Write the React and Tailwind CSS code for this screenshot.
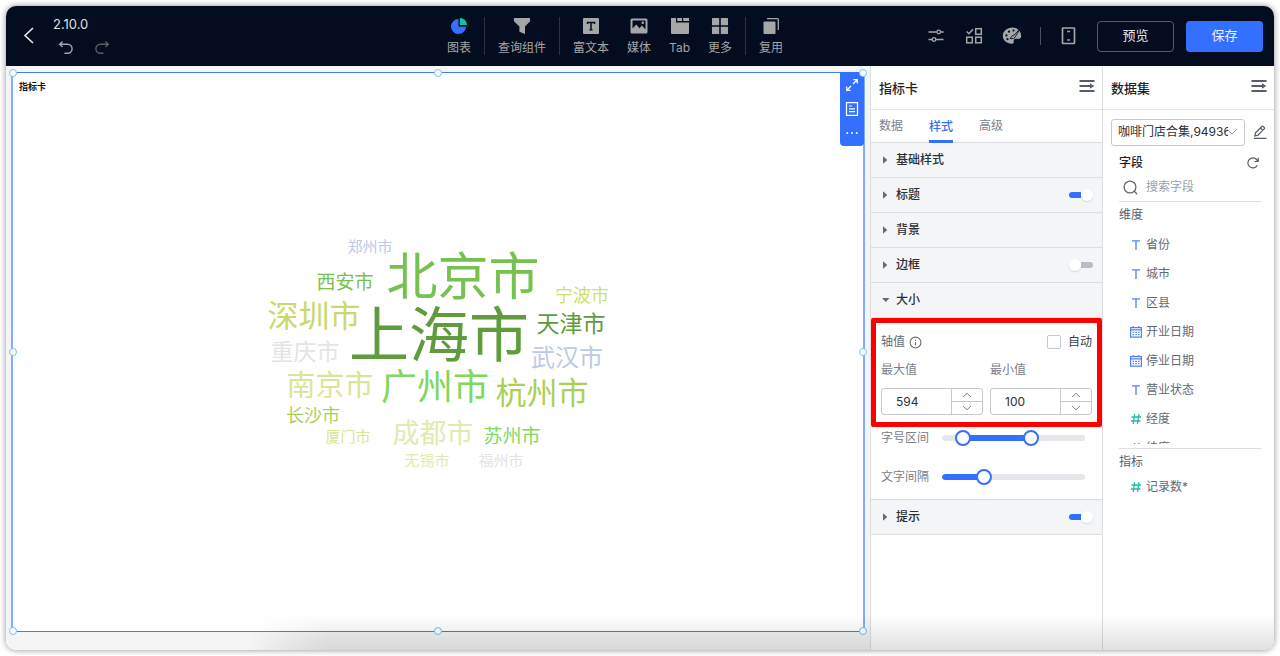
import React, { useState } from "react";
import { Info } from "lucide-react";

const words = [
  { text: "郑州市", x: -68, y: -105, size: 15, color: "#bcc9e8" },
  { text: "北京市", x: 25, y: -75, size: 51, color: "#76c150" },
  { text: "西安市", x: -93, y: -69, size: 19, color: "#76c150" },
  { text: "宁波市", x: 144, y: -56, size: 18, color: "#cfdf6c" },
  { text: "深圳市", x: -124, y: -36, size: 31, color: "#cad96b" },
  { text: "上海市", x: 1, y: -17, size: 60, color: "#609b3d" },
  { text: "天津市", x: 133, y: -28, size: 23, color: "#609b3d" },
  { text: "重庆市", x: -133, y: 0, size: 23, color: "#e4e4e4" },
  { text: "武汉市", x: 129, y: 6, size: 24, color: "#bcc9e8" },
  { text: "南京市", x: -108, y: 34, size: 29, color: "#dbe596" },
  { text: "广州市", x: -3, y: 35, size: 36, color: "#80d860" },
  { text: "杭州市", x: 104, y: 41, size: 31, color: "#abcf55" },
  { text: "长沙市", x: -125, y: 64, size: 18, color: "#abcf55" },
  { text: "厦门市", x: -90, y: 85, size: 15, color: "#dbe596" },
  { text: "成都市", x: -5, y: 82, size: 27, color: "#e2eab0" },
  { text: "苏州市", x: 74, y: 85, size: 19, color: "#80d860" },
  { text: "无锡市", x: -11, y: 109, size: 15, color: "#e2eab0" },
  { text: "福州市", x: 63, y: 109, size: 15, color: "#e4e4e4" },
];

const navGroups = [
  [{ label: "图表", icon: "pie" }],
  [{ label: "查询组件", icon: "funnel" }],
  [
    { label: "富文本", icon: "text" },
    { label: "媒体", icon: "media" },
    { label: "Tab", icon: "tab" },
    { label: "更多", icon: "more" },
  ],
  [{ label: "复用", icon: "reuse" }],
];

const fields = [
  { name: "省份", type: "text" },
  { name: "城市", type: "text" },
  { name: "区县", type: "text" },
  { name: "开业日期", type: "date" },
  { name: "停业日期", type: "date" },
  { name: "营业状态", type: "text" },
  { name: "经度", type: "number" },
  { name: "纬度", type: "number" },
];

function NavIcon({ name }) {
  const svg = "h-[18px] w-[18px]";
  if (name === "pie")
    return (
      <svg viewBox="0 0 18 18" className={svg}>
        <path d="M8.500 2A7.500 7.500 0 1 0 16 9.800H8.500Z" fill="#3370ff" />
        <path d="M10 1a7 7 0 0 1 7 7h-7Z" fill="#04c8a8" />
      </svg>
    );
  if (name === "funnel")
    return (
      <svg viewBox="0 0 18 18" className={svg} fill="#a6a6a6">
        <path d="M1.500 1h15a.6.6 0 0 1 .6.6v2.600L12 9.600V17l-5.600-2.300V9.600L.9 4.200V1.600a.6.6 0 0 1 .6-.6Z" />
      </svg>
    );
  if (name === "text")
    return (
      <svg viewBox="0 0 18 18" className={svg}>
        <rect x="1" y="1" width="16" height="16" rx="1" fill="#a6a6a6" />
        <path d="M5.500 7V5.500h7V7M9 5.500v7.200M7.500 12.700h3" stroke="#040c1f" strokeWidth="1.500" fill="none" />
      </svg>
    );
  if (name === "media")
    return (
      <svg viewBox="0 0 18 18" className={svg}>
        <rect x=".5" y="1.500" width="17" height="15" rx="1.500" fill="#a6a6a6" />
        <path d="M2.500 3.500h13v9L12 8.500l-2.500 2.800L6.300 7.500l-3.800 4Z" fill="#040c1f" />
        <circle cx="12.800" cy="5.800" r="1.300" fill="#a6a6a6" />
      </svg>
    );
  if (name === "tab")
    return (
      <svg viewBox="0 0 18 18" className={svg} fill="#a6a6a6">
        <path d="M0 1h5v4.500h13V16a1 1 0 0 1-1 1H1a1 1 0 0 1-1-1Z" />
        <path d="M6.200 1h4.800v3H6.200ZM12.200 1H18v3h-5.800Z" />
      </svg>
    );
  if (name === "more")
    return (
      <svg viewBox="0 0 18 18" className={svg} fill="#a6a6a6">
        <rect x="1" y="1" width="7.200" height="7.200" rx=".5" />
        <rect x="9.800" y="1" width="7.200" height="7.200" rx=".5" />
        <rect x="1" y="9.800" width="7.200" height="7.200" rx=".5" />
        <rect x="9.800" y="9.800" width="7.200" height="7.200" rx=".5" />
      </svg>
    );
  return (
    <svg viewBox="0 0 18 18" className={svg}>
      <rect x="1.500" y="4.500" width="12" height="12.500" rx="1" fill="#a6a6a6" />
      <path d="M5 1.700h10.500a.8.8 0 0 1 .8.8V13" stroke="#a6a6a6" strokeWidth="1.300" fill="none" />
    </svg>
  );
}

function Separator({ tall }) {
  return <span className={tall ? "mx-1 h-[38px] w-px bg-[#2c3342]" : "h-[18px] w-px bg-[#4a505d]"} />;
}

function Header() {
  return (
    <header className="flex h-[60px] shrink-0 items-center bg-[#040c1f] text-[#a6a6a6]">
      <div className="flex flex-1 items-center gap-4 pl-[15px]">
        <button type="button" aria-label="返回" className="flex h-8 w-4 items-center justify-center text-[#e8e8ea]">
          <svg viewBox="0 0 16 20" className="h-5 w-4" fill="none" stroke="currentColor" strokeWidth="1.600">
            <path d="M12 2 4 9.500 12 17" />
          </svg>
        </button>
        <div className="flex flex-col gap-[6px] pb-[2px]">
          <span className="text-[13px] leading-5 text-[#dfe0e3]">2.10.0</span>
          <div className="flex gap-5 pl-[5px]">
            <button type="button" aria-label="撤销" className="text-[#a4a6ab]">
              <svg viewBox="0 0 16 16" className="size-4" fill="none" stroke="currentColor" strokeWidth="1.400">
                <path d="M4.600 1.500 1.600 4.300l3 2.800M2 4.300h7.600a4.500 4.500 0 0 1 0 9H6.500" />
              </svg>
            </button>
            <button type="button" aria-label="重做" className="text-[#5b5e66]">
              <svg viewBox="0 0 16 16" className="size-4" fill="none" stroke="currentColor" strokeWidth="1.400">
                <path d="m11.400 1.500 3 2.800-3 2.800M14 4.300H6.400a4.500 4.500 0 0 0 0 9h3.100" />
              </svg>
            </button>
          </div>
        </div>
      </div>

      <nav className="mr-[54px] flex items-center">
        {navGroups.map((group, i) => (
          <React.Fragment key={i}>
            {i > 0 && <Separator tall />}
            {group.map((item) => (
              <button key={item.label} type="button" className="flex flex-col items-center gap-[5px] px-[9px] text-xs leading-4">
                <NavIcon name={item.icon} />
                {item.label}
              </button>
            ))}
          </React.Fragment>
        ))}
      </nav>

      <div className="flex flex-1 items-center justify-end gap-[18px] pr-[11px]">
        <button type="button" aria-label="配置">
          <svg viewBox="0 0 20 20" className="size-5" fill="none" stroke="currentColor" strokeWidth="1.300">
            <path d="M2.500 6h8.200M14.700 6h3M2.500 13.500h3.500M10 13.500h7.500" />
            <circle cx="12.700" cy="6" r="1.800" />
            <circle cx="8" cy="13.500" r="1.800" />
          </svg>
        </button>
        <button type="button" aria-label="组件">
          <svg viewBox="0 0 20 20" className="size-5" fill="none" stroke="currentColor" strokeWidth="1.500">
            <path d="m2.700 5.500 2.200 2.200L9 3.200" />
            <rect x="11.700" y="2.700" width="5.600" height="5.600" />
            <rect x="2.700" y="11.200" width="5.600" height="5.600" />
            <rect x="11.700" y="11.200" width="5.600" height="5.600" />
          </svg>
        </button>
        <button type="button" aria-label="主题">
          <svg viewBox="0 0 20 20" className="size-5">
            <path
              d="M10.500 1.500C5 1.500.8 5.200.8 9.800c0 4.500 4 7.900 8.700 7.900 1.800 0 2.400-1 2.200-2.200-.2-1.600.4-2.700 2.300-2.700h2.300c1.700 0 2.900-1 2.900-2.900C19.200 5.200 15.300 1.500 10.500 1.500Z"
              fill="currentColor"
            />
            <g fill="#040c1f">
              <circle cx="4.400" cy="9.400" r="1.100" />
              <circle cx="7" cy="5.700" r="1.100" />
              <circle cx="11.500" cy="4.500" r="1.100" />
              <circle cx="5.500" cy="13.200" r="1.100" />
            </g>
            <path d="M19.700.8 12.300 9c-2-.3-2.600 1.800-4.300 3.500 2.700.5 5.300-.3 5.600-2.300Z" fill="currentColor" stroke="#040c1f" strokeWidth=".9" />
          </svg>
        </button>
        <Separator />
        <button type="button" aria-label="移动端">
          <svg viewBox="0 0 20 20" className="size-5" fill="none" stroke="currentColor" strokeWidth="1.700">
            <rect x="3.500" y="2" width="12" height="15.500" rx=".6" />
            <path d="M8.200 5.500h2.800M8.200 14h2.800" />
          </svg>
        </button>
        <div className="flex gap-3 text-[13px]">
          <button type="button" className="h-[31px] w-[77px] rounded border border-[#565b67] text-[#e4e5e8]">
            预览
          </button>
          <button type="button" className="h-[31px] w-[77px] rounded bg-[#3370ff] text-[#eaf0ff]">
            保存
          </button>
        </div>
      </div>
    </header>
  );
}

const handlePlaces = [
  "left-0 top-0",
  "left-1/2 top-0",
  "left-full top-0",
  "left-0 top-1/2",
  "left-full top-1/2",
  "left-0 top-full",
  "left-1/2 top-full",
  "left-full top-full",
];

function Canvas() {
  return (
    <main className="flex min-w-0 flex-1 bg-[#f4f5f7] px-[5px] pt-[6px] pb-[18px]">
      <section className="relative flex flex-1 flex-col border-x-2 border-y border-x-[#85aaff] border-y-[#3f7cff] bg-white">
        <h1 className="px-[6px] pt-[6px] text-[9px] leading-4 font-bold text-[#111111]">指标卡</h1>
        <div className="-mt-[22px] flex flex-1 items-center justify-center">
          <svg viewBox="-172 -120 344 240" className="h-[240px] w-[344px]" role="img" aria-label="城市词云">
            {words.map((w) => (
              <text key={w.text} x={w.x} y={Math.round(w.y + w.size * 0.38) - 1} fontSize={w.size} fill={w.color} textAnchor="middle">
                {w.text}
              </text>
            ))}
          </svg>
        </div>
        <div className="absolute -top-px -right-px flex h-[74px] w-6 flex-col items-center justify-between rounded-b-sm bg-[#3370ff] py-[6px] text-white">
          <button type="button" aria-label="放大">
            <svg viewBox="0 0 14 14" className="size-[14px]" fill="none" stroke="currentColor" strokeWidth="1.200">
              <path d="M8 6l4-4M8.500 1.700h3.800v3.800M6 8l-4 4M1.700 8.500v3.800h3.800" />
            </svg>
          </button>
          <button type="button" aria-label="查看数据">
            <svg viewBox="0 0 14 14" className="size-[14px]" fill="none" stroke="currentColor" strokeWidth="1.200">
              <path d="M1.500.7h11v12.600h-11ZM4 4h3M4 6.800h6M4 9.600h6" />
            </svg>
          </button>
          <button type="button" aria-label="更多操作">
            <svg viewBox="0 0 14 14" className="size-[14px]" fill="currentColor">
              <circle cx="2.200" cy="7" r="1" />
              <circle cx="7" cy="7" r="1" />
              <circle cx="11.800" cy="7" r="1" />
            </svg>
          </button>
        </div>
        {handlePlaces.map((place) => (
          <span
            key={place}
            className={`absolute size-2 -translate-x-1/2 -translate-y-1/2 rounded-full border border-[#6fc5f7] bg-white ${place}`}
          />
        ))}
      </section>
    </main>
  );
}

function CollapseIcon() {
  return (
    <svg viewBox="0 0 16 14" className="h-[14px] w-4" fill="none" stroke="#575d6b" strokeWidth="1.800">
      <path d="M.5 2h15M.5 7H12M.5 12h15" />
      <path d="m11 4.300 4.300 2.700L11 9.700Z" fill="#575d6b" stroke="none" />
    </svg>
  );
}

function PanelTitle({ children }) {
  return (
    <div className="flex h-11 shrink-0 items-center justify-between border-b border-[#e3e5e8] pr-[7px] pl-2">
      <h2 className="text-[13px] leading-5 font-medium text-[#1f2329]">{children}</h2>
      <button type="button" aria-label="收起" className="-mt-1">
        <CollapseIcon />
      </button>
    </div>
  );
}

function Toggle({ label, defaultOn }) {
  const [on, setOn] = useState(defaultOn);
  const knob = <span className="size-3 rounded-full bg-white shadow-[0_1px_2px_rgba(0,0,0,0.12)]" />;
  return (
    <label className="relative flex cursor-pointer items-center">
      <input type="checkbox" className="sr-only" aria-label={label} checked={on} onChange={() => setOn(!on)} />
      {!on && knob}
      <span className={on ? "h-[6px] w-3 rounded-l-full bg-[#3370ff]" : "h-[6px] w-3 rounded-r-full bg-[#b9bcc4]"} />
      {on && knob}
    </label>
  );
}

function SectionRow({ title, open, toggle }) {
  return (
    <div className="flex h-[35px] items-center justify-between border-b border-[#dcdee2] bg-[#f4f5f7] pr-[9px] pl-[11px]">
      <button type="button" aria-expanded={!!open} className="flex items-center gap-[6px] text-xs font-medium text-[#2b2f36]">
        <svg viewBox="0 0 8 8" className="size-2" fill="#646a73">
          <path d={open ? "M0 2h7.500L3.800 6Z" : "M1 .3 5.300 4 1 7.700Z"} />
        </svg>
        {title}
      </button>
      {toggle !== undefined && <Toggle label={title} defaultOn={toggle} />}
    </div>
  );
}

function NumberField({ id, label, initial }) {
  const [value, setValue] = useState(initial);
  return (
    <div className="flex min-w-0 flex-col gap-[10px]">
      <label htmlFor={id} className="text-xs leading-4 text-[#7b808a]">
        {label}
      </label>
      <div className="flex h-[27px] rounded-[3px] border border-[#c6c9cf] bg-white">
        <input
          id={id}
          inputMode="numeric"
          className="w-0 min-w-0 flex-1 pl-[14px] text-xs text-[#2b2f36] outline-none"
          value={value}
          onChange={(e) => setValue(Number(e.target.value) || 0)}
        />
        <div className="flex w-[31px] flex-col border-l border-[#c6c9cf] text-[#7b808a]">
          <button type="button" aria-label="增加" className="flex flex-1 items-center justify-center border-b border-[#c6c9cf]" onClick={() => setValue(value + 1)}>
            <svg viewBox="0 0 10 6" className="h-[6px] w-[10px]" fill="none" stroke="currentColor">
              <path d="M1 5l4-3.700L9 5" />
            </svg>
          </button>
          <button type="button" aria-label="减少" className="flex flex-1 items-center justify-center" onClick={() => setValue(value - 1)}>
            <svg viewBox="0 0 10 6" className="h-[6px] w-[10px]" fill="none" stroke="currentColor">
              <path d="M1 1l4 3.700L9 1" />
            </svg>
          </button>
        </div>
      </div>
    </div>
  );
}

const rangeClass =
  "pointer-events-none absolute inset-0 h-full w-full appearance-none bg-transparent outline-none [&::-webkit-slider-thumb]:pointer-events-auto [&::-webkit-slider-thumb]:size-4 [&::-webkit-slider-thumb]:appearance-none [&::-webkit-slider-thumb]:rounded-full [&::-webkit-slider-thumb]:border-2 [&::-webkit-slider-thumb]:border-solid [&::-webkit-slider-thumb]:border-[#3370ff] [&::-webkit-slider-thumb]:bg-white";

function SliderRow({ label, initial }) {
  const [values, setValues] = useState(initial);
  const start = values.length > 1 ? values[0] : 0;
  const end = values[values.length - 1];
  return (
    <div className="flex h-5 items-center gap-[13px] pr-[17px] pl-[10px]">
      <span className="w-12 text-xs text-[#7b808a]">{label}</span>
      <div className="relative flex h-4 flex-1 items-center">
        <div className="h-[6px] w-full overflow-hidden rounded-full bg-[#e5e7eb]">
          <div className="h-full rounded-full bg-[#3370ff]" style={{ marginLeft: `${start}%`, width: `${end - start}%` }} />
        </div>
        {values.map((v, i) => (
          <input
            key={i}
            type="range"
            aria-label={label}
            className={rangeClass}
            value={v}
            onChange={(e) => setValues(values.map((old, j) => (j === i ? Number(e.target.value) : old)))}
          />
        ))}
      </div>
    </div>
  );
}

function StylePanel() {
  return (
    <aside className="w-[232px] shrink-0 border-l border-[#dcdee2] bg-white">
      <PanelTitle>指标卡</PanelTitle>
      <div className="flex h-[33px] gap-[26px] border-b border-[#dcdee2] pl-2 text-xs text-[#7b808a]" role="tablist">
        <button type="button" role="tab">
          数据
        </button>
        <button type="button" role="tab" aria-selected="true" className="-mb-px border-b-[3px] border-[#3370ff] pt-[3px] font-medium text-[#3370ff]">
          样式
        </button>
        <button type="button" role="tab">
          高级
        </button>
      </div>
      <SectionRow title="基础样式" />
      <SectionRow title="标题" toggle={true} />
      <SectionRow title="背景" />
      <SectionRow title="边框" toggle={false} />
      <SectionRow title="大小" open />
      <div className="border-b border-[#dcdee2] pb-3">
        <div className="rounded-[2px] border-[5px] border-[#ff0000] px-[5px] pt-[9px] pb-[7px]">
          <div className="flex h-5 items-center justify-between">
            <span className="flex items-center gap-1 text-xs text-[#646a73]">
              轴值
              <Info className="size-[13px]" strokeWidth={2} />
            </span>
            <label className="flex items-center gap-[7px] text-xs text-[#3c4048]">
              <input type="checkbox" className="size-[14px] appearance-none rounded-[2px] border border-[#c6c9cf] bg-white checked:bg-[#3370ff]" />
              自动
            </label>
          </div>
          <div className="mt-[10px] grid grid-cols-2 gap-[7px]">
            <NumberField id="axis-max" label="最大值" initial={594} />
            <NumberField id="axis-min" label="最小值" initial={100} />
          </div>
        </div>
        <div className="flex flex-col gap-[19px] pt-px">
          <SliderRow label="字号区间" initial={[10, 64]} />
          <SliderRow label="文字间隔" initial={[27]} />
        </div>
      </div>
      <SectionRow title="提示" toggle={true} />
    </aside>
  );
}

function FieldIcon({ type }) {
  if (type === "date")
    return (
      <svg viewBox="0 0 12 12" className="size-3" fill="none" stroke="#5181f5" strokeWidth="1.200">
        <path d="M.6 1.600h10.800v9.600H.6ZM.6 3.800h10.800M3.200 0v2M8.800 0v2" />
        <path d="M2.600 6.300h7M2.600 8.700h7" strokeWidth="1.300" strokeDasharray="1.500 1.200" />
      </svg>
    );
  if (type === "number")
    return (
      <svg viewBox="0 0 12 12" className="size-3" fill="none" stroke="#23baa0" strokeWidth="1.300">
        <path d="M4.700 1 3.200 11M9 1 7.500 11M1.500 4h9.500M1 8h9.500" />
      </svg>
    );
  return (
    <svg viewBox="0 0 12 12" className="size-3" fill="none" stroke="#5181f5" strokeWidth="1.300">
      <path d="M2 1.800h8M6 1.800V11" />
    </svg>
  );
}

function Field({ name, type }) {
  return (
    <li className="flex h-[29px] items-center gap-1 pl-[11px] text-xs text-[#646a73]">
      <FieldIcon type={type} />
      {name}
    </li>
  );
}

function DataPanel() {
  return (
    <aside className="w-[172px] shrink-0 border-l border-[#dcdee2] bg-white">
      <PanelTitle>数据集</PanelTitle>
      <div className="flex items-center gap-2 pt-2 pr-[7px] pl-2">
        <div className="relative min-w-0 flex-1">
          <select
            aria-label="数据集"
            className="h-[27px] w-full appearance-none rounded-[3px] border border-[#c6c9cf] bg-white pr-4 pl-[6px] text-xs text-[#2b2f36]"
          >
            <option>咖啡门店合集,94936</option>
          </select>
          <svg viewBox="0 0 10 6" className="pointer-events-none absolute top-[11px] right-2 h-[6px] w-[10px]" fill="none" stroke="#8f959e">
            <path d="M.5.5 5 5 9.500.5" />
          </svg>
        </div>
        <button type="button" aria-label="编辑">
          <svg viewBox="0 0 14 14" className="size-[14px]" fill="none" stroke="#575d6b" strokeWidth="1.200">
            <path d="M1.800 11 2.500 7.800 8.800 1.500a1 1 0 0 1 1.400 0l1 1a1 1 0 0 1 0 1.400L5 10.200ZM7.500 3l2.500 2.500M1 13.300h12.500" />
          </svg>
        </button>
      </div>
      <div className="pr-[13px] pl-4">
        <div className="flex h-[35px] items-center justify-between">
          <h3 className="text-xs font-medium text-[#1f2329]">字段</h3>
          <button type="button" aria-label="刷新" className="mr-[2px]">
            <svg viewBox="0 0 12 12" className="size-3" fill="none" stroke="#575d6b" strokeWidth="1.200">
              <path d="M10.300 8.300A5 5 0 1 1 10.600 4.200M11.200.8v3.700H7.500" />
            </svg>
          </button>
        </div>
        <label className="flex h-[21px] items-center gap-2 border-b border-[#dcdee2] pb-[7px] pl-1">
          <svg viewBox="0 0 15 15" className="size-[15px]" fill="none" stroke="#646a73" strokeWidth="1.300">
            <circle cx="7" cy="7" r="5.900" />
            <path d="m11.300 11.300 2.900 2.900" />
          </svg>
          <input
            aria-label="搜索字段"
            placeholder="搜索字段"
            className="h-4 w-0 min-w-0 flex-1 text-xs leading-4 outline-none placeholder:text-[#9a9fa8]"
          />
        </label>
        <h4 className="pt-[5px] text-xs leading-4 text-[#575d6b]">维度</h4>
        <ul className="mt-2 h-[213px] overflow-hidden">
          {fields.map((f) => (
            <Field key={f.name} {...f} />
          ))}
        </ul>
        <h4 className="mt-1 border-t border-[#dcdee2] pt-[5px] text-xs leading-4 text-[#575d6b]">指标</h4>
        <ul className="mt-[3px]">
          <Field name="记录数*" type="number" />
        </ul>
      </div>
    </aside>
  );
}

export default function App() {
  return (
    <div className="flex h-screen bg-white p-[6px] font-['Inter','Noto_Sans_CJK_SC',sans-serif]">
      <div className="relative flex min-w-0 flex-1 flex-col overflow-hidden rounded-[10px] shadow-[0_0_6px_rgba(0,0,0,0.45)]">
        <Header />
        <div className="flex min-h-0 flex-1">
          <Canvas />
          <StylePanel />
          <DataPanel />
        </div>
        <div className="pointer-events-none absolute right-0 bottom-0 left-[240px] h-9 bg-linear-to-t from-black/12 to-transparent [mask-image:linear-gradient(to_right,transparent,black_80px)]" />
      </div>
    </div>
  );
}
